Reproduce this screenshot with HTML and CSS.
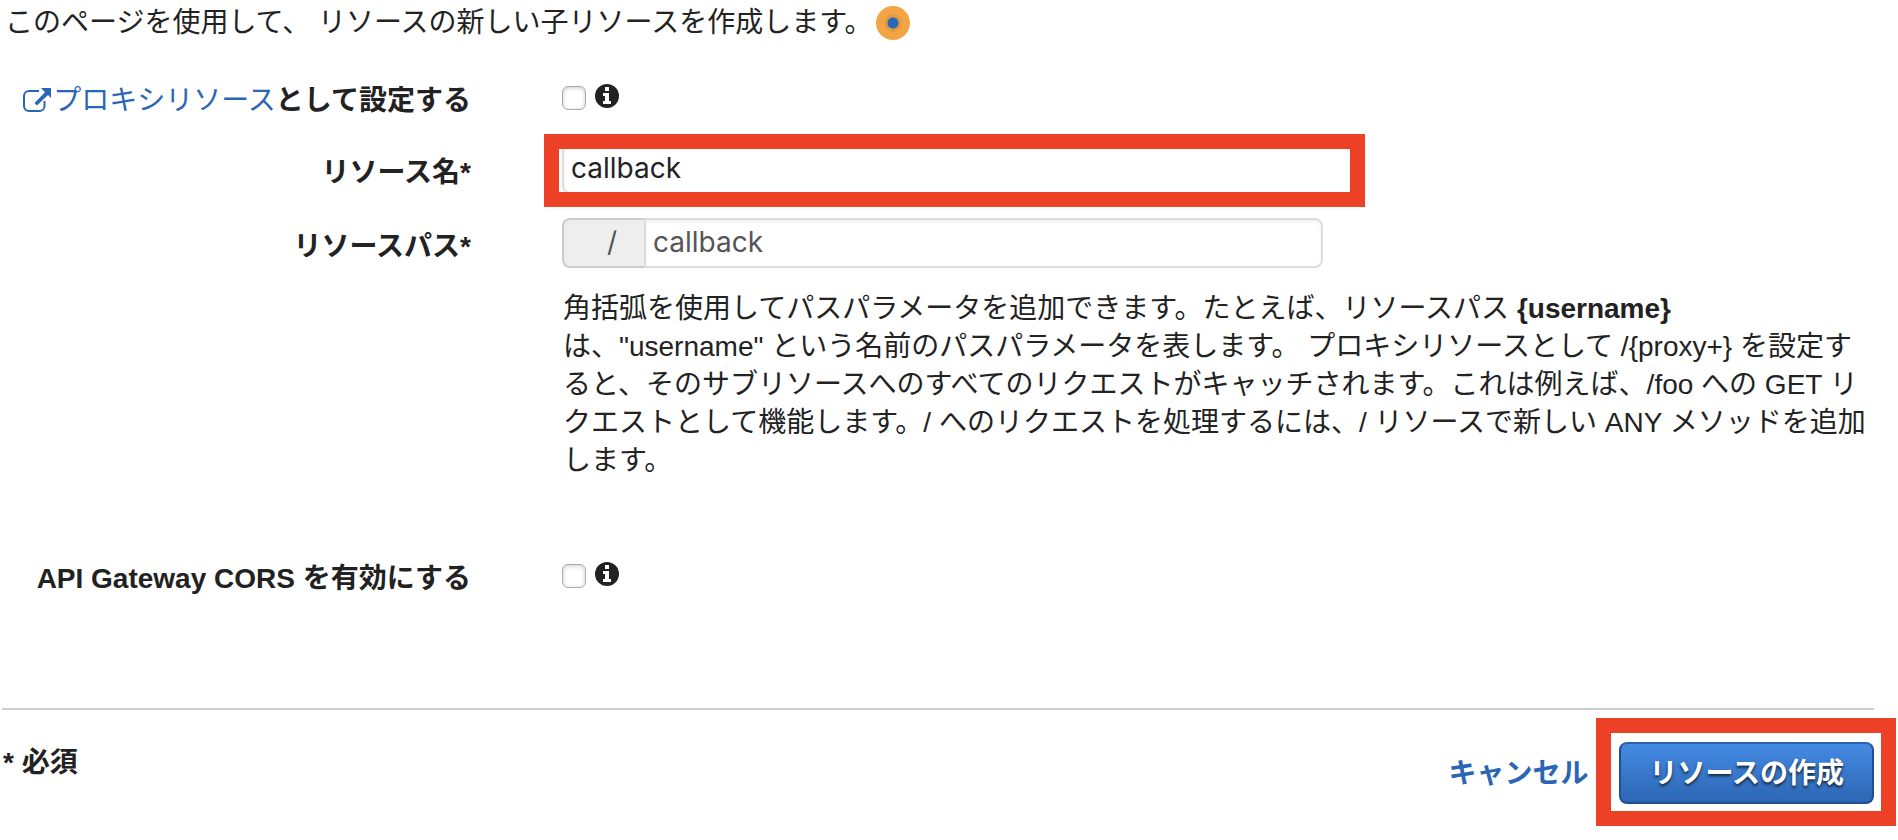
FILE: index.html
```html
<!DOCTYPE html>
<html lang="ja">
<head>
<meta charset="utf-8">
<title>新しい子リソース</title>
<link rel="stylesheet" href="styles.css">
</head>
<body>
<form class="page">
  <p class="intro">このページを使用して、 リソースの新しい子リソースを作成します。<span class="hint-dot"></span></p>

  <div class="row check-row">
    <div class="label"><a class="doc-link" href="#"><svg class="link-icon" viewBox="0 0 28 28" aria-hidden="true"><path d="M16 5H6a5 5 0 0 0-5 5v10a5 5 0 0 0 5 5h10.500a5 5 0 0 0 5-5v-5" fill="none" stroke="currentColor" stroke-width="2"/><path d="M18 2h10v10l-3-3-11 10.500-2.500-2.500L22 6.200z" fill="currentColor"/></svg>プロキシリソース</a><label for="proxy">として設定する</label></div>
    <div class="field check-field">
      <input class="check" type="checkbox" id="proxy">
      <svg class="info" viewBox="0 0 24 24" aria-hidden="true"><circle cx="12" cy="12" r="12" fill="#222"/><path d="M10 3h4v4h-4zM8 9h6v8h2v3H8v-3h2v-5H8z" fill="#fff"/></svg>
    </div>
  </div>

  <div class="row">
    <label class="label" for="name">リソース名*</label>
    <div class="field name-field"><input class="text" type="text" id="name" value="callback"></div>
  </div>

  <div class="row">
    <label class="label" for="path">リソースパス*</label>
    <div class="field">
      <div class="group"><span class="prefix">/</span><input class="text path" type="text" id="path" value="callback"></div>
      <p class="help">角括弧を使用してパスパラメータを追加できます。たとえば、リソースパス <b>{username}</b><br>は、"username" という名前のパスパラメータを表します。 プロキシリソースとして /{proxy+} を設定すると、そのサブリソースへのすべてのリクエストがキャッチされます。これは例えば、/foo への GET リクエストとして機能します。/ へのリクエストを処理するには、/ リソースで新しい ANY メソッドを追加します。</p>
    </div>
  </div>

  <div class="row check-row cors">
    <label class="label" for="cors">API Gateway CORS を有効にする</label>
    <div class="field check-field">
      <input class="check" type="checkbox" id="cors">
      <svg class="info" viewBox="0 0 24 24" aria-hidden="true"><circle cx="12" cy="12" r="12" fill="#222"/><path d="M10 3h4v4h-4zM8 9h6v8h2v3H8v-3h2v-5H8z" fill="#fff"/></svg>
    </div>
  </div>

  <footer class="footer">
    <span class="required">* 必須</span>
    <div class="actions">
      <a class="cancel" href="#">キャンセル</a>
      <div class="submit-wrap"><button class="submit" type="submit">リソースの作成</button></div>
    </div>
  </footer>
</form>
</body>
</html>
```
FILE: styles.css
```css
* { box-sizing: border-box; }
body {
  margin: 0;
  background: #fff;
  color: #222;
  font: 28px/38px "Liberation Sans", "Noto Sans CJK JP", sans-serif;
}
.page { padding: 4px 24px 36px 2px; }
.intro {
  display: flex;
  align-items: center;
  gap: 4px;
  margin: 0 0 28px;
  padding-left: 3px;
}
.hint-dot {
  width: 34px;
  height: 34px;
  border-radius: 50%;
  background: radial-gradient(circle, #2a68b8 5px, #e09a42 6px, #e09a42 8px, #f3a445 9px);
}
.row {
  display: grid;
  grid-template-columns: 469px minmax(0, 1fr);
  column-gap: 91px;
  min-height: 50px;
  margin-bottom: 24px;
}
.label { padding-top: 10px; font-weight: bold; text-align: right; }
.check-row .label { padding-top: 12px; }
.doc-link { color: #2a66b5; font-weight: normal; text-decoration: none; }
.link-icon { width: 28px; height: 28px; margin-right: 2px; vertical-align: -4px; }
.check-field { display: flex; align-items: flex-start; gap: 9px; padding-top: 14px; }
.check {
  appearance: none;
  width: 24px;
  height: 24px;
  margin: 2px 0 0;
  border: 1px solid #aaa;
  border-radius: 6px;
  background: #fff;
  box-shadow: inset 0 1px 4px #ccc;
}
.info { width: 24px; height: 24px; }
.text {
  display: block;
  width: 100%;
  height: 50px;
  margin: 0;
  padding: 0 7px 2px;
  border: 2px solid #ddd;
  border-radius: 8px;
  background: #fff;
  box-shadow: inset 0 2px 3px #eee;
  color: #222;
  font: 28px/38px Inter, sans-serif;
}
.name-field { position: relative; width: 61%; height: 50px; }
.name-field::after {
  content: "";
  position: absolute;
  inset: -10px -3px -13px -18px;
  border: 15px solid #ec4027;
  pointer-events: none;
}
.group { display: flex; width: 58%; }
.prefix {
  width: 82px;
  flex: none;
  padding: 3px 27px 0 0;
  border: 2px solid #ccc;
  border-right: 0;
  border-radius: 8px 0 0 8px;
  background: #eee;
  color: #555;
  font-family: Inter, sans-serif;
  text-align: right;
}
.path { flex: 1; min-width: 0; border-radius: 0 8px 8px 0; color: #555; }
.help { margin: 22px 0 0; padding-left: 1px; }
.cors { margin: 68px 0 110px; }
.footer {
  display: flex;
  justify-content: space-between;
  align-items: flex-start;
  border-top: 2px solid #ccc;
  padding-top: 32px;
  font-weight: bold;
}
.actions { display: flex; align-items: center; gap: 31px; }
.required { padding: 2px 0 0 1px; }
.cancel { padding-top: 2px; color: #2a66b5; text-decoration: none; }
.submit-wrap { position: relative; }
.submit-wrap::after {
  content: "";
  position: absolute;
  inset: -24px -22px -22px -23px;
  border: 15px solid #ec4027;
  pointer-events: none;
}
.submit {
  display: block;
  height: 62px;
  padding: 2px 28px 0;
  border: 2px solid #1f4f8f;
  border-top-color: #2b62ad;
  border-radius: 8px;
  background: linear-gradient(#448ae3, #2d66b4);
  color: #fff;
  font: inherit;
  text-shadow: 0 2px 3px #123;
}
```
